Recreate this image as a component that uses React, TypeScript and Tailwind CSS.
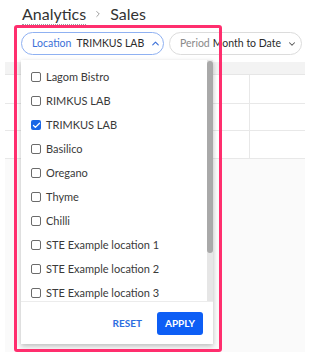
import { ChevronDown, ChevronUp, ChevronRight, Check } from "lucide-react";

const locations = [
  { name: "Lagom Bistro", checked: false },
  { name: "RIMKUS LAB", checked: false },
  { name: "TRIMKUS LAB", checked: true },
  { name: "Basilico", checked: false },
  { name: "Oregano", checked: false },
  { name: "Thyme", checked: false },
  { name: "Chilli", checked: false },
  { name: "STE Example location 1", checked: false },
  { name: "STE Example location 2", checked: false },
  { name: "STE Example location 3", checked: false },
];

function Checkbox({ checked }: { checked: boolean }) {
  if (checked) {
    return (
      <span className="flex h-[10px] w-[10px] items-center justify-center rounded-[2px] bg-[#1a66e6]">
        <Check className="h-[9px] w-[9px] text-white" strokeWidth={3.5} />
      </span>
    );
  }
  return <span className="h-[10px] w-[10px] rounded-[2px] border-[1.5px] border-[#6b6b6b]" />;
}

export default function App() {
  return (
    <div className="relative h-[357px] w-[310px] overflow-hidden bg-white font-['Lato',sans-serif] text-[#333]">
      <div className="flex items-center gap-[7px] pl-[22px] pt-[3px] text-[16px] leading-[22px]">
        <span className="border-b border-dotted border-[#999] leading-[20px]">Analytics</span>
        <ChevronRight className="h-[10px] w-[10px] text-[#888]" strokeWidth={2} />
        <span>Sales</span>
      </div>

      <div className="mt-[7px] flex gap-[5px] whitespace-nowrap pl-[21px]">
        <div className="flex h-[23px] w-[143px] shrink-0 items-center rounded-full border border-[#8fb1f2] pl-[10px] text-[10.5px]">
          <span className="text-[#3b70d8]">Location</span>
          <span className="ml-[5px] text-[#2b2b2b]">TRIMKUS LAB</span>
          <ChevronUp className="ml-[6px] h-[11px] w-[11px] shrink-0 text-[#3b70d8]" strokeWidth={2.5} />
        </div>
        <div className="flex h-[23px] w-[133px] shrink-0 items-center rounded-full border border-[#dcdcdc] pl-[10px] text-[10.5px]">
          <span className="text-[#8a8a8a]">Period</span>
          <span className="ml-[3px] text-[#2b2b2b]">Month to Date</span>
          <ChevronDown className="ml-[6px] h-[10px] w-[10px] shrink-0 text-[#555]" strokeWidth={2.5} />
        </div>
      </div>

      <div className="absolute left-[5px] top-[62px] h-[290px] w-[300px] bg-[#fafafa]">
        <div className="h-[13px] border-b border-[#e6e6e6] bg-[#f3f3f3]" />
        <div className="grid grid-cols-[245px_1fr] bg-white">
          <div className="h-[29px] border-b border-r border-[#e8e8e8]" />
          <div className="h-[29px] border-b border-[#e8e8e8]" />
          <div className="h-[27px] border-b border-r border-[#e8e8e8]" />
          <div className="h-[27px] border-b border-[#e8e8e8]" />
          <div className="h-[28px] border-b border-r border-[#e8e8e8]" />
          <div className="h-[28px] border-b border-[#e8e8e8]" />
        </div>
      </div>

      <div className="absolute left-[21px] top-[60px] flex h-[284px] w-[192px] flex-col bg-white shadow-[0_2px_5px_rgba(0,0,0,0.25)]">
        <div className="flex flex-1 overflow-hidden">
          <ul className="flex-1 pt-[5px]">
            {locations.map((loc) => (
              <li key={loc.name} className="flex h-[24px] items-center gap-[5px] pl-[10px] text-[11px] text-[#3a3a3a]">
                <Checkbox checked={loc.checked} />
                <span>{loc.name}</span>
              </li>
            ))}
          </ul>
          <div className="w-[6px] bg-[#e6e6e6]">
            <div className="mt-[1px] h-[192px] rounded-full bg-[#a9a9a9]" />
          </div>
        </div>
        <div className="flex h-[43px] items-center justify-end gap-[15px] border-t border-[#ececec] pr-[10px]">
          <span className="text-[10px] font-bold text-[#2c6de0]">RESET</span>
          <button className="h-[23px] w-[46px] rounded-[3px] bg-[#0d5ef5] text-[10px] font-bold text-white">
            APPLY
          </button>
        </div>
      </div>

      <div className="pointer-events-none absolute left-[14px] top-[25px] h-[327px] w-[208px] rounded-[3px] border-[3px] border-[#ff2e6e]" />
    </div>
  );
}
